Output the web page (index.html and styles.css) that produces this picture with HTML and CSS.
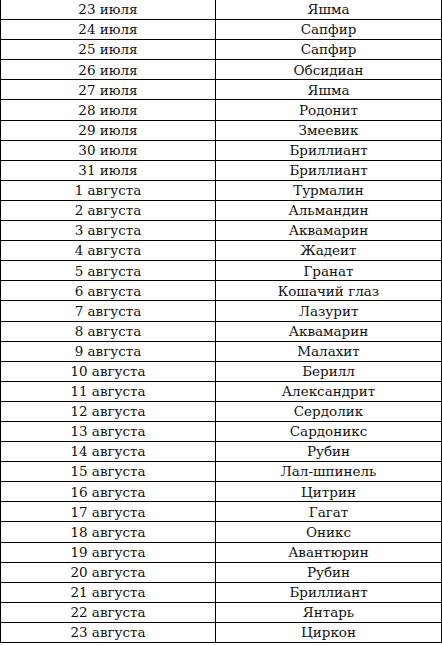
FILE: index.html
```html
<!DOCTYPE html>
<html lang="ru">
<head>
<meta charset="utf-8">
<link rel="stylesheet" href="styles.css">
</head>
<body>
<div class="grid">
<div class="c d">23 июля</div><div class="c s">Яшма</div>
<div class="c d">24 июля</div><div class="c s">Сапфир</div>
<div class="c d">25 июля</div><div class="c s">Сапфир</div>
<div class="c d">26 июля</div><div class="c s">Обсидиан</div>
<div class="c d">27 июля</div><div class="c s">Яшма</div>
<div class="c d">28 июля</div><div class="c s">Родонит</div>
<div class="c d">29 июля</div><div class="c s">Змеевик</div>
<div class="c d">30 июля</div><div class="c s">Бриллиант</div>
<div class="c d">31 июля</div><div class="c s">Бриллиант</div>
<div class="c d">1 августа</div><div class="c s">Турмалин</div>
<div class="c d">2 августа</div><div class="c s">Альмандин</div>
<div class="c d">3 августа</div><div class="c s">Аквамарин</div>
<div class="c d">4 августа</div><div class="c s">Жадеит</div>
<div class="c d">5 августа</div><div class="c s">Гранат</div>
<div class="c d">6 августа</div><div class="c s">Кошачий глаз</div>
<div class="c d">7 августа</div><div class="c s">Лазурит</div>
<div class="c d">8 августа</div><div class="c s">Аквамарин</div>
<div class="c d">9 августа</div><div class="c s">Малахит</div>
<div class="c d">10 августа</div><div class="c s">Берилл</div>
<div class="c d">11 августа</div><div class="c s">Александрит</div>
<div class="c d">12 августа</div><div class="c s">Сердолик</div>
<div class="c d">13 августа</div><div class="c s">Сардоникс</div>
<div class="c d">14 августа</div><div class="c s">Рубин</div>
<div class="c d">15 августа</div><div class="c s">Лал-шпинель</div>
<div class="c d">16 августа</div><div class="c s">Цитрин</div>
<div class="c d">17 августа</div><div class="c s">Гагат</div>
<div class="c d">18 августа</div><div class="c s">Оникс</div>
<div class="c d">19 августа</div><div class="c s">Авантюрин</div>
<div class="c d">20 августа</div><div class="c s">Рубин</div>
<div class="c d">21 августа</div><div class="c s">Бриллиант</div>
<div class="c d">22 августа</div><div class="c s">Янтарь</div>
<div class="c d">23 августа</div><div class="c s">Циркон</div>
</div>
</body>
</html>
```
FILE: styles.css
```css
html, body {
  margin: 0;
  padding: 0;
  background: #fff;
}
.grid {
  width: 442px;
  box-sizing: border-box;
  display: grid;
  grid-template-columns: 215px 1fr;
  grid-auto-rows: 20.1px;
  border-left: 1px solid #000;
  border-right: 1px solid #000;
  font-family: "DejaVu Serif", serif;
  font-size: 13.5px;
  color: #111;
}
.c {
  box-sizing: border-box;
  border-bottom: 1px solid #000;
  display: flex;
  align-items: center;
  justify-content: center;
  line-height: 1;
  padding-top: 1px;
}
.d {
  border-right: 1px solid #000;
}
```
